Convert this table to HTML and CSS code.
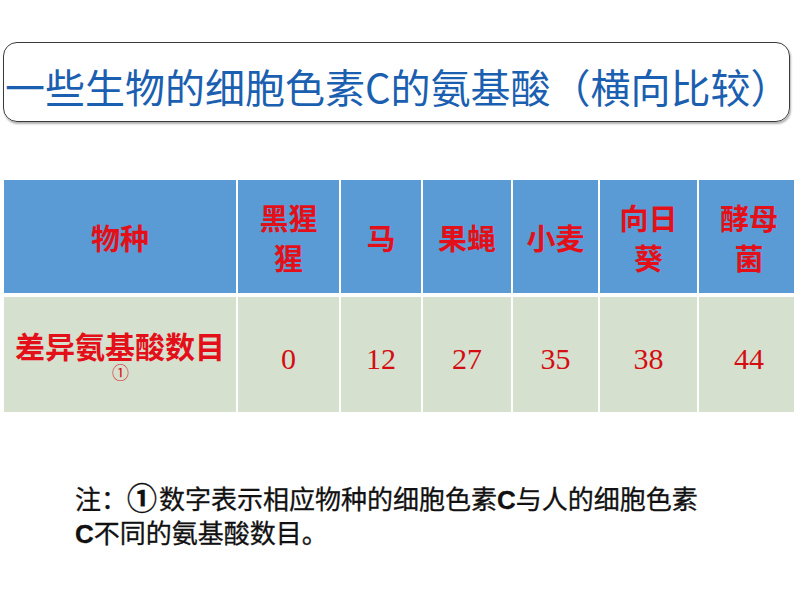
FILE: index.html
```html
<!DOCTYPE html>
<html lang="zh-CN">
<head>
<meta charset="utf-8">
<title>细胞色素C的氨基酸</title>
<link rel="stylesheet" href="styles.css">
</head>
<body>
<div class="page">
  <div class="title-box">
    <h1 class="title">一些生物的细胞色素C的氨基酸（横向比较）</h1>
  </div>

  <div class="grid">
    <div class="cell head first">物种</div>
    <div class="cell head">黑猩<br>猩</div>
    <div class="cell head">马</div>
    <div class="cell head">果蝇</div>
    <div class="cell head">小麦</div>
    <div class="cell head">向日<br>葵</div>
    <div class="cell head">酵母<br>菌</div>

    <div class="cell body first">
      <div class="label">差异氨基酸数目</div>
      <div class="mark">①</div>
    </div>
    <div class="cell body num">0</div>
    <div class="cell body num">12</div>
    <div class="cell body num">27</div>
    <div class="cell body num">35</div>
    <div class="cell body num">38</div>
    <div class="cell body num">44</div>
  </div>

  <p class="note">注：<span class="circ">①</span>数字表示相应物种的细胞色素<b>C</b>与人的细胞色素<br><b>C</b>不同的氨基酸数目。</p>
</div>
</body>
</html>
```

FILE: styles.css
```css
html, body {
  margin: 0;
  padding: 0;
  background: #ffffff;
  overflow: hidden;
}

.page {
  width: 794px;
  height: 596px;
  overflow: hidden;
  padding-top: 42px;
  box-sizing: border-box;
}

.title-box {
  margin-left: 3px;
  width: 787px;
  height: 80px;
  box-sizing: border-box;
  border: 1.5px solid #3a3a3a;
  border-radius: 14px;
  box-shadow: 1px 2px 2px rgba(0, 0, 0, 0.3);
  display: flex;
  align-items: center;
  padding: 8px 0 0 1px;
}

.title {
  margin: 0;
  font-family: "Noto Sans CJK SC", "Noto Sans", sans-serif;
  font-weight: 400;
  font-size: 40px;
  line-height: 48px;
  color: #1b5fb1;
  white-space: nowrap;
}

.grid {
  margin-top: 58px;
  margin-left: 4px;
  display: grid;
  grid-template-columns: 232px 101px 80px 88px 85px 97px 100px;
  grid-template-rows: 113px 115px;
  column-gap: 2px;
  row-gap: 4px;
  background: #ffffff;
}

.cell {
  display: flex;
  flex-direction: column;
  align-items: center;
  justify-content: center;
  text-align: center;
  color: #e3101a;
}

.head {
  background: #5b9bd5;
  font-family: "Noto Sans CJK SC", sans-serif;
  font-weight: 700;
  font-size: 29px;
  line-height: 40px;
}

.body {
  background: #d6e0ce;
}

.label {
  font-family: "Noto Sans CJK SC", sans-serif;
  font-weight: 700;
  font-size: 30px;
  line-height: 32px;
  padding-top: 2px;
}

.mark {
  font-family: "DejaVu Serif", "Liberation Serif", serif;
  font-size: 17px;
  line-height: 18px;
  margin-top: 3px;
  color: #d81018;
}

.num {
  font-family: "Liberation Serif", serif;
  font-size: 30px;
  color: #d40d12;
  padding-top: 8px;
  box-sizing: border-box;
}

.note {
  margin: 70px 0 0 75px;
  font-family: "Noto Sans CJK SC", sans-serif;
  font-weight: 400;
  font-size: 26px;
  line-height: 32px;
  color: #111111;
  -webkit-text-stroke: 0.3px #111111;
}

.note b {
  font-family: "Liberation Sans", sans-serif;
  font-weight: 700;
}

.circ {
  font-family: "Noto Sans CJK SC", sans-serif;
  font-weight: 700;
  font-size: 30px;
  line-height: 26px;
  margin-right: 2px;
}
```
